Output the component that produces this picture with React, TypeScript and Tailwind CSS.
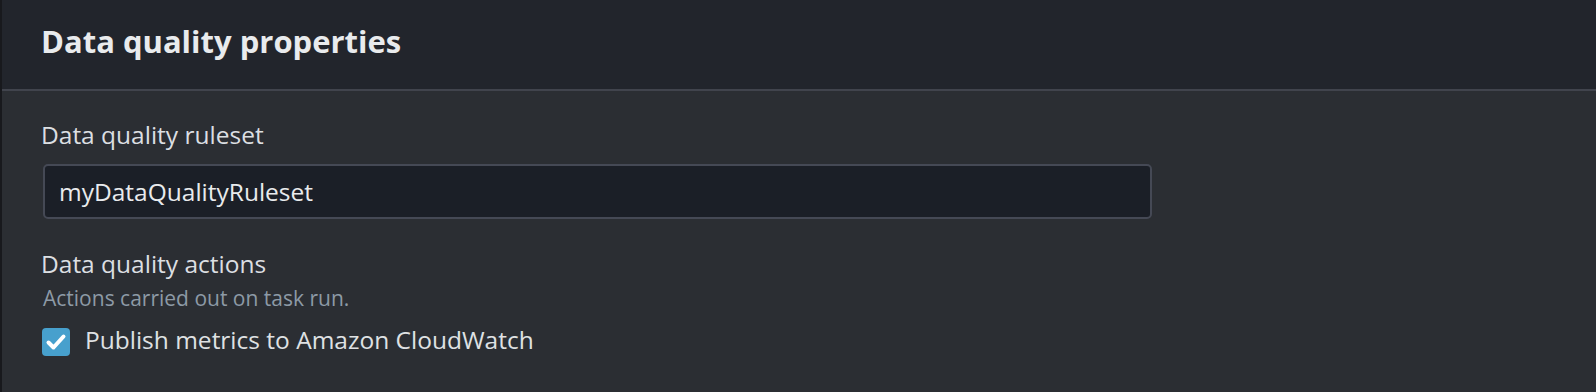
import React from 'react';

// Data quality properties panel (dark console style)

function CheckIcon() {
  return (
    <svg viewBox="0 0 28 28" className="h-[28px] w-[28px]" fill="none">
      <path d="M6.5 14.5l5 5L21.5 8.5" stroke="#fff" strokeWidth="4" strokeLinecap="round" strokeLinejoin="round" />
    </svg>
  );
}

export default function App() {
  return (
    <div
      className="flex h-[392px] w-full flex-col border-l-2 border-[#18191d] bg-[#2b2e33] text-[#e9ebed]"
      style={{ fontFamily: '"Open Sans", "Noto Sans", Arial, sans-serif' }}
    >
      <header className="h-[91px] shrink-0 border-b-2 border-[#41444d] bg-[#22252c] pl-[39px] pt-[21px]">
        <h2 className="text-[31px] font-bold leading-[40px] text-[#e9ebed]">Data quality properties</h2>
      </header>

      <main className="flex flex-col pl-[39px] pt-[29px]">
        <label className="text-[24.5px] leading-[30px] text-[#dcdfe2]">Data quality ruleset</label>
        <div className="ml-[2px] mt-[14px] flex h-[55px] w-[1109px] items-center rounded-[5px] border-2 border-[#454955] bg-[#1b1f27] px-[14px]">
          <span className="text-[24.5px] leading-[30px] text-[#e9ebed]">myDataQualityRuleset</span>
        </div>

        <div className="mt-[30px] text-[24.5px] leading-[30px] text-[#dcdfe2]">Data quality actions</div>
        <div className="ml-[2px] mt-[6px] text-[21px] leading-[26px] text-[#8d9aa6]">Actions carried out on task run.</div>

        <div className="mt-[15px] flex items-start gap-[15px]">
          <span className="ml-[1px] mt-[2px] flex h-[28px] w-[28px] items-center justify-center rounded-[4px] bg-[#47a0cd]">
            <CheckIcon />
          </span>
          <span className="text-[24.5px] leading-[28px] text-[#dfe1e3]">Publish metrics to Amazon CloudWatch</span>
        </div>
      </main>
    </div>
  );
}
